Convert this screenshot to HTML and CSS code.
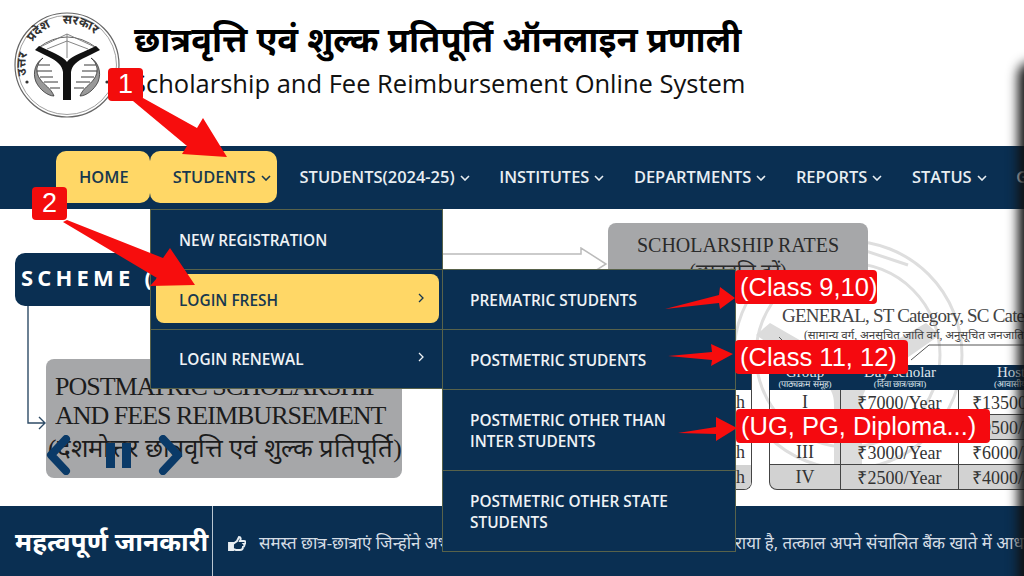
FILE: index.html
```html
<!DOCTYPE html>
<html lang="hi">
<head>
<meta charset="utf-8">
<title>Scholarship and Fee Reimbursement Online System</title>
<link rel="stylesheet" href="styles.css">
</head>
<body>
<div class="page">
  <header class="masthead">
    <svg class="logo" viewBox="0 0 106 106" aria-hidden="true">
      <circle cx="53" cy="53" r="52" fill="#fff" stroke="#666" stroke-width="1.2"/>
      <circle cx="53" cy="53" r="49.5" fill="none" stroke="#888" stroke-width=".8"/>
      <path id="arcText" d="M13.5 66A41.5 41.5 0 1 1 92.5 66" fill="none"/>
      <text class="logo-text"><textPath href="#arcText" startOffset="3">उत्तर प्रदेश सरकार</textPath></text>
      <path d="M24 36Q53 14 83 36" fill="none" stroke="#666" stroke-width="1"/>
      <path d="M24 36L53 22L83 36M53 22V46M33 37L53 29L74 37" fill="none" stroke="#777" stroke-width=".9"/>
      <path d="M21 38L25 34L38 40C45 43 51 47 53 50C55 47 61 43 69 40L82 34L86 38L72 45C63 49 58 53 57 60V88H49V60C48 53 43 49 35 45Z" fill="#111"/>
      <path class="fish" d="M29 46C22 52 21 60 26 67C30 73 37 76 40 84C34 84 26 78 22 70C18 60 22 50 29 46Z"/>
      <path class="fish" d="M77 46C84 52 85 60 80 67C76 73 69 76 66 84C72 84 80 78 84 70C88 60 84 50 77 46Z"/>
      <path class="fish-line" d="M24 53H36M23 59H38M26 65H39M30 70H44M36 76H46M82 53H70M83 59H68M80 65H67M76 70H62M70 76H60"/>
      <circle cx="13" cy="70" r="1.6" fill="#333"/><circle cx="93" cy="70" r="1.6" fill="#333"/>
    </svg>
    <div class="titles">
      <h1 class="title-hi">छात्रवृत्ति एवं शुल्क प्रतिपूर्ति ऑनलाइन प्रणाली</h1>
      <p class="title-en">Scholarship and Fee Reimbursement Online System</p>
    </div>
  </header>

  <nav class="navbar">
    <a class="nav-item active">HOME</a>
    <a class="nav-item active students">STUDENTS<svg class="caret" viewBox="0 0 10 6"><path d="M1 1l4 4 4-4"/></svg></a>
    <a class="nav-item">STUDENTS(2024-25)<svg class="caret" viewBox="0 0 10 6"><path d="M1 1l4 4 4-4"/></svg></a>
    <a class="nav-item">INSTITUTES<svg class="caret" viewBox="0 0 10 6"><path d="M1 1l4 4 4-4"/></svg></a>
    <a class="nav-item">DEPARTMENTS<svg class="caret" viewBox="0 0 10 6"><path d="M1 1l4 4 4-4"/></svg></a>
    <a class="nav-item">REPORTS<svg class="caret" viewBox="0 0 10 6"><path d="M1 1l4 4 4-4"/></svg></a>
    <a class="nav-item">STATUS<svg class="caret" viewBox="0 0 10 6"><path d="M1 1l4 4 4-4"/></svg></a>
    <a class="nav-item">G</a>
  </nav>

  <main class="stage">
    <div class="scheme-tab">SCHEME (</div>
    <svg class="connector" viewBox="0 0 22 130" aria-hidden="true"><path d="M2 0V117H19M13 111l6 6-6 6"/></svg>
    <div class="slide-card postmatric">
      <div>POSTMATRIC SCHOLARSHIP</div>
      <div>AND FEES REIMBURSEMENT</div>
      <div class="postmatric-hi">(दशमोत्तर छात्रवृत्ति एवं शुल्क प्रतिपूर्ति)</div>
    </div>
    <div class="slider-controls">
      <svg viewBox="0 0 26 40"><path d="M21 4L6 20l15 16"/></svg>
      <svg class="pause" viewBox="0 0 26 25"><path d="M0 0h9v25H0zM16 0h9v25H16z"/></svg>
      <svg viewBox="0 0 26 40"><path d="M5 4l15 16L5 36"/></svg>
    </div>

    <svg class="flow-arrow" viewBox="0 0 170 50" aria-hidden="true"><path d="M0 7H139V1L164 17 139 33V27H0"/></svg>
    <svg class="watermark" viewBox="0 0 240 240" aria-hidden="true">
      <circle cx="120" cy="120" r="114"/><circle cx="120" cy="120" r="92"/>
      <path d="M60 30L120 10L180 30"/>
      <path class="wm-fill" d="M28 100L42 88L108 126C114 130 118 134 120 138C122 134 126 130 132 126L198 88L212 100L146 146C138 152 134 158 134 170V230H106V170C106 158 102 152 94 146Z"/>
    </svg>
    <div class="slide-card rates">
      <div>SCHOLARSHIP RATES</div>
      <div class="rates-hi">(छात्रवृत्ति दरें)</div>
    </div>
    <p class="rates-heading">GENERAL, ST Category, SC Category</p>
    <p class="rates-sub">(सामान्य वर्ग, अनसूचित जाति वर्ग, अनुसूचित जनजाति वर्ग)</p>
    <svg class="leader" viewBox="0 0 300 40" aria-hidden="true"><path d="M0 8L8 16M132 31L150 16H300"/></svg>
    <div class="left-stub">
      <span class="stub-head"></span><span>h</span><span>h</span><span>h</span><span class="shade">h</span>
    </div>
    <table class="rates-table">
      <thead>
        <tr><th>Group<small>(पाठ्यक्रम समूह)</small></th><th>Day scholar<small>(दिवा छात्र/छात्रा)</small></th><th>Hostler<small>(आवासीय छात्र)</small></th></tr>
      </thead>
      <tbody>
        <tr><td>I</td><td>₹7000/Year</td><td>₹13500/Year</td></tr>
        <tr class="shade"><td>II</td><td>₹6500/Year</td><td>₹9500/Year</td></tr>
        <tr><td>III</td><td>₹3000/Year</td><td>₹6000/Year</td></tr>
        <tr class="shade"><td>IV</td><td>₹2500/Year</td><td>₹4000/Year</td></tr>
      </tbody>
    </table>
  </main>

  <footer class="notice">
    <h2 class="notice-title">महत्वपूर्ण जानकारी</h2>
    <div class="ticker">
      <svg class="thumb" viewBox="0 0 18 16" aria-hidden="true"><path class="cuff" d="M1 7h4v7H1z"/><path d="M5 8l4-3 2-4c2 0 2 2 1 4h4c2 0 2 3 0 3 1 1 0 3-1 3 0 2-1 3-3 3H8l-3-1"/></svg>
      <span class="ticker-text">समस्त छात्र-छात्राएं जिन्होंने अभी तक अपने बैंक खाते को आधार से लिंक नहीं कराया है, तत्काल अपने संचालित बैंक खाते में आधार</span>
    </div>
  </footer>

  <ul class="menu menu-main">
    <li class="menu-row"><a class="menu-link">NEW REGISTRATION</a></li>
    <li class="menu-row"><a class="menu-link selected">LOGIN FRESH<svg class="chev" viewBox="0 0 6 10"><path d="M1 1l4 4-4 4"/></svg></a></li>
    <li class="menu-row"><a class="menu-link">LOGIN RENEWAL<svg class="chev" viewBox="0 0 6 10"><path d="M1 1l4 4-4 4"/></svg></a></li>
  </ul>
  <ul class="menu menu-sub">
    <li class="menu-row"><a class="menu-link">PREMATRIC STUDENTS</a></li>
    <li class="menu-row"><a class="menu-link">POSTMETRIC STUDENTS</a></li>
    <li class="menu-row"><a class="menu-link">POSTMETRIC OTHER THAN INTER STUDENTS</a></li>
    <li class="menu-row"><a class="menu-link">POSTMETRIC OTHER STATE STUDENTS</a></li>
  </ul>

  <div class="edge-shadow"></div>

  <svg class="arrows" viewBox="0 0 1024 576" aria-hidden="true">
    <path d="M133 101L143 98L197 128L203 118L227 157L182 154L187 146Z"/>
    <path d="M63 222L67 220L163 258L170 248L195 285L150 286L157 278Z"/>
    <path d="M665 309L719 295L720 287L735 298L720 309L719 303Z"/>
    <path d="M668 356L712 352L711 344L733 354L711 366L712 360Z"/>
    <path d="M678 433L716 427L716 417L737 428L716 441L716 434Z"/>
  </svg>
  <span class="badge badge-1">1</span>
  <span class="badge badge-2">2</span>
  <span class="tag tag-a">(Class 9,10)</span>
  <span class="tag tag-b">(Class 11, 12)</span>
  <span class="tag tag-c">(UG, PG, Diploma...)</span>
</div>
</body>
</html>
```

FILE: styles.css
```css
* { box-sizing: border-box; }
html, body { margin: 0; padding: 0; }
body { width: 1024px; height: 576px; overflow: hidden; background: #fff; font-family: "Open Sans", "Noto Sans", "Noto Sans Devanagari", sans-serif; }
.page { position: relative; width: 1024px; height: 576px; overflow: hidden; display: flex; flex-direction: column; }
ul { list-style: none; margin: 0; padding: 0; }

.masthead { height: 146px; flex: none; display: flex; align-items: flex-start; padding: 12px 0 0 14px; gap: 14px; }
.logo { width: 106px; height: 106px; flex: none; }
.logo-text { font-size: 12.5px; font-weight: 700; word-spacing: 9px; fill: #333; }
.fish { fill: #999; stroke: #333; stroke-width: .8; }
.fish-line { fill: none; stroke: #222; stroke-width: .9; }
.titles { padding-top: 5px; }
.title-hi { margin: 0; font-size: 34.5px; line-height: 44px; font-weight: 700; color: #000; white-space: nowrap; }
.title-en { margin: 7px 0 0 -2px; font-size: 25.5px; font-weight: 500; line-height: 30px; color: #111; white-space: nowrap; }

.navbar { height: 63px; flex: none; background: #0a2f52; display: flex; align-items: center; padding: 0 0 0 56px; white-space: nowrap; }
.nav-item { height: 52px; display: flex; align-items: center; padding: 0; margin-left: 29.5px; color: #e8eef2; font-size: 16.45px; font-weight: 600; margin-top: -2px; }
.nav-item.active { background: #ffd766; color: #17384f; border-radius: 10px; margin-left: 0; padding: 0 21px 0 23px; }
.nav-item.students { padding: 0 6px 0 23px; }
.caret { width: 10px; height: 6px; margin-left: 5px; margin-top: 2px; fill: none; stroke: currentColor; stroke-width: 1.6; }
.nav-item.students + .nav-item { margin-left: 23px; }

.stage { position: relative; flex: 1; min-height: 0; background: #fff; overflow: hidden; }
.scheme-tab { position: absolute; left: 15px; top: 44px; width: 140px; height: 53px; background: #0a2f52; border-radius: 10px 0 0 10px; color: #fff; font-weight: 700; font-size: 22px; letter-spacing: 4.2px; padding: 9px 0 0 6px; white-space: nowrap; }
.connector { position: absolute; left: 26px; top: 97px; width: 22px; height: 130px; fill: none; stroke: #2e4b66; stroke-width: 1.4; }
.slide-card { position: absolute; background: #a6a7a9; border-radius: 8px; font-family: "Liberation Serif", serif; color: #1c1c1c; white-space: nowrap; }
.postmatric { left: 46px; top: 150px; width: 356px; height: 119px; padding: 13px 0 0 9px; font-size: 26px; line-height: 29px; letter-spacing: -1px; overflow: hidden; }
.postmatric-hi { margin-left: -7px; margin-top: 4px; font-size: 25.7px; letter-spacing: 0; }
.slider-controls { position: absolute; left: 45px; top: 226px; display: flex; align-items: center; }
.slider-controls svg { width: 26px; height: 40px; fill: none; stroke: #0a3a68; stroke-width: 8; stroke-linecap: round; stroke-linejoin: round; }
.slider-controls .pause { width: 26px; height: 25px; fill: #0a3a68; stroke: none; margin: 0 26px 0 35px; }

.flow-arrow { position: absolute; left: 442px; top: 38px; width: 170px; height: 50px; fill: #fff; stroke: #bbb; stroke-width: 1.5; }
.rates { left: 608px; top: 14px; width: 260px; height: 80px; text-align: center; font-size: 20px; line-height: 26px; padding-top: 9px; color: #2a2a2a; }
.rates-hi { font-size: 20px; }
.watermark { position: absolute; left: 728px; top: 26px; width: 240px; height: 240px; fill: none; stroke: #dedede; stroke-width: 3; }
.wm-fill { fill: #dcdcdc; stroke: none; }
.rates-heading { position: absolute; left: 782px; top: 95px; margin: 0; font: 19px/24px "Liberation Serif", serif; letter-spacing: -.8px; color: #444; white-space: nowrap; }
.rates-sub { position: absolute; left: 804px; top: 118px; margin: 0; font: 11.5px/16px "Liberation Serif", "Noto Sans", serif; color: #444; white-space: nowrap; }
.leader { position: absolute; left: 779px; top: 120px; width: 300px; height: 40px; fill: none; stroke: #555; stroke-width: 1; }
.left-stub { position: absolute; left: 736px; top: 156px; width: 16px; height: 125px; font: 400 18px/25px "Liberation Serif", serif; color: #333; background: #fff; border-right: 1px solid #444; border-bottom: 1px solid #444; border-radius: 0 0 8px 0; display: grid; grid-template-rows: repeat(5, 25px); overflow: hidden; }
.stub-head { background: #0a2f52; }
.left-stub .shade { background: #d2d2d2; }
.rates-table { position: absolute; left: 769px; top: 156px; width: 310px; table-layout: fixed; border-collapse: separate; border-spacing: 0; font-family: "Liberation Serif", serif; color: #333; }
.rates-table th { background: #0a2f52; color: #dfe6ec; font-weight: 400; font-size: 15px; line-height: 14px; height: 25px; vertical-align: bottom; padding: 0; }
.rates-table small { display: block; font-size: 9px; line-height: 11px; }
.rates-table th:nth-child(1) { width: 72px; }
.rates-table th:nth-child(2) { width: 118px; }
.rates-table td { text-align: center; font-size: 18px; height: 25px; padding: 0; border-right: 1px solid #444; border-bottom: 1px solid #444; white-space: nowrap; overflow: hidden; }
.rates-table td:first-child { border-left: 1px solid #444; }
.rates-table tr:last-child td:first-child { border-radius: 0 0 0 8px; }
.rates-table .shade td { background: #d2d2d2; }
.rates-table td:last-child { text-align: left; padding-left: 13px; }

.notice { height: 70px; flex: none; background: #0a2f52; color: #fff; display: flex; }
.notice-title { margin: 0; width: 213px; flex: none; border-right: 1px solid #b9c6d1; font-size: 26.3px; font-weight: 700; padding: 17px 0 0 15px; white-space: nowrap; height: 70px; }
.ticker { display: flex; align-items: flex-start; padding: 26px 0 0 15px; gap: 13px; white-space: nowrap; color: #d5dde5; overflow: hidden; }
.thumb { width: 18px; height: 16px; flex: none; fill: none; stroke: #e8eef2; stroke-width: 1.9; margin-top: 4px; }
.cuff { fill: #e8eef2; }
.ticker-text { font-size: 16.9px; line-height: 22px; }

.menu { position: absolute; background: #0a2f52; border: 1px solid #58624a; }
.menu-main { left: 150px; top: 209px; width: 293px; }
.menu-sub { left: 442px; top: 269px; width: 294px; }
.menu-row { border-bottom: 1px solid #58624a; display: flex; }
.menu-row:last-child { border-bottom: none; }
.menu-main .menu-row { height: 60px; padding: 4px 3px 6px 5px; }
.menu-main .menu-row:first-child { padding-top: 5px; padding-bottom: 5px; }
.menu-main .menu-row:last-child { height: 58px; padding-bottom: 5px; }
.menu-link { flex: 1; display: flex; align-items: center; justify-content: space-between; padding: 2px 15px 0 23px; color: #eef2f5; font-size: 15.4px; line-height: 21px; font-weight: 600; border-radius: 8px; }
.menu-link.selected { background: #ffd766; color: #17384f; padding-top: 3px; }
.chev { width: 6px; height: 10px; fill: none; stroke: currentColor; stroke-width: 1.3; margin-top: -5px; }
.menu-sub .menu-row { min-height: 60px; }
.menu-sub .menu-row:nth-child(3) { height: 81px; }
.menu-sub .menu-row:nth-child(4) { height: 80px; }
.menu-sub .menu-link { padding: 2px 60px 0 27px; }

.edge-shadow { position: absolute; left: 1018px; top: 62px; width: 40px; height: 560px; background: #111; filter: blur(6px); border-radius: 14px 0 0 0; }

.arrows { position: absolute; inset: 0; width: 1024px; height: 576px; fill: #f70d0d; }
.badge { position: absolute; width: 35px; height: 33px; background: #f30c0c; color: #fff; border-radius: 4px; font: 400 27px/33px "Liberation Sans", sans-serif; text-align: center; }
.badge-1 { left: 108px; top: 68px; }
.badge-2 { left: 32px; top: 187px; }
.tag { position: absolute; background: #f5090f; color: #fff; border-radius: 4px; font-family: "Liberation Sans", sans-serif; font-size: 25.5px; line-height: 34px; height: 34px; padding: 0 0 0 5px; white-space: nowrap; }
.tag-a { left: 735px; top: 270px; width: 142px; }
.tag-b { left: 735px; top: 340px; width: 173px; }
.tag-c { left: 736px; top: 409px; width: 254px; }
```
